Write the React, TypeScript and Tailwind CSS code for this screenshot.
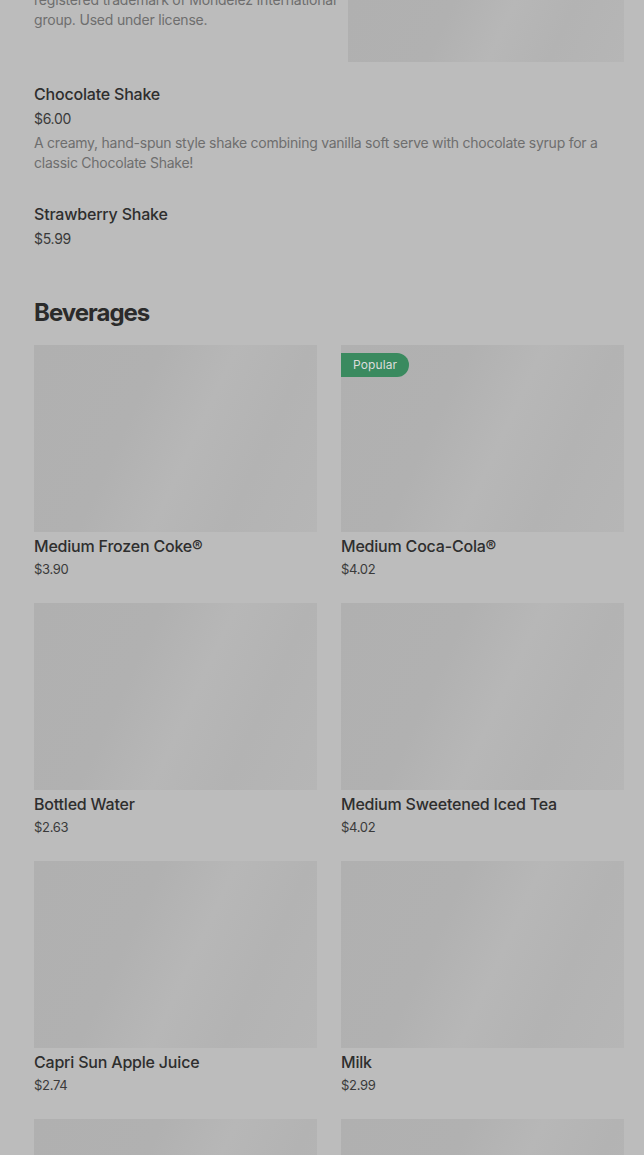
import React from "react";

const font = { fontFamily: "Inter, 'Noto Sans', 'Liberation Sans', sans-serif" };

const drinks: { name: string; price: string; popular?: boolean }[] = [
  { name: "Medium Frozen Coke®", price: "$3.90" },
  { name: "Medium Coca-Cola®", price: "$4.02", popular: true },
  { name: "Bottled Water", price: "$2.63" },
  { name: "Medium Sweetened Iced Tea", price: "$4.02" },
  { name: "Capri Sun Apple Juice", price: "$2.74" },
  { name: "Milk", price: "$2.99" },
];

function Placeholder({ className }: { className: string }) {
  return (
    <div
      className={
        "bg-[linear-gradient(115deg,#b0b0b0_0%,#b1b1b1_35%,#b7b7b7_55%,#b3b3b3_75%,#b6b6b6_100%)] " +
        className
      }
    />
  );
}

export default function App() {
  return (
    <div className="h-[1155px] w-[644px] overflow-hidden bg-[#bcbcbc] pl-[34px] pr-[20px]" style={font}>
      {/* previous item (cut off) */}
      <div className="flex justify-between">
        <p className="-mt-[10px] w-[306px] text-[14px] leading-[20px] tracking-[-0.2px] text-[#6e6e6e]">
          registered trademark of Mondelez International group. Used under license.
        </p>
        <Placeholder className="h-[62px] w-[276px]" />
      </div>

      {/* Chocolate Shake */}
      <div className="pt-[20px]">
        <h3 className="text-[16px] leading-[24px] font-medium tracking-[-0.2px] text-[#2e2e2e]">Chocolate Shake</h3>
        <p className="mt-[3px] text-[14px] leading-[20px] tracking-[-0.3px] text-[#3a3a3a]">$6.00</p>
        <p className="mt-[4px] text-[14px] leading-[20px] tracking-[-0.25px] text-[#6e6e6e]">
          A creamy, hand-spun style shake combining vanilla soft serve with chocolate syrup for a classic Chocolate Shake!
        </p>
      </div>

      {/* Strawberry Shake */}
      <div className="pt-[29px]">
        <h3 className="text-[16px] leading-[24px] font-medium tracking-[-0.2px] text-[#2e2e2e]">Strawberry Shake</h3>
        <p className="mt-[3px] text-[14px] leading-[20px] tracking-[-0.3px] text-[#3a3a3a]">$5.99</p>
      </div>

      {/* Beverages */}
      <h2 className="mt-[48px] text-[24px] leading-[32px] font-bold tracking-[-1px] text-[#2b2b2b]">Beverages</h2>

      <div className="mt-[16px] grid grid-cols-2 gap-x-[24px] gap-y-[24px]">
        {drinks.map((d) => (
          <div key={d.name} className="flex flex-col">
            <div className="relative">
              <Placeholder className="h-[187px] w-full" />
              {d.popular && (
                <span className="absolute left-0 top-[8px] flex h-[24px] items-center rounded-r-full bg-[#3a8a5f] pl-[12px] pr-[12px] text-[12px] tracking-[0.1px] text-[#dcdcdc]">
                  Popular
                </span>
              )}
            </div>
            <h3 className="mt-[2px] text-[16px] leading-[24px] font-medium tracking-[-0.2px] text-[#2e2e2e]">{d.name}</h3>
            <p className="mt-[1px] text-[13px] leading-[20px] tracking-[-0.3px] text-[#3a3a3a]">{d.price}</p>
          </div>
        ))}
        <Placeholder className="h-[187px] w-full" />
        <Placeholder className="h-[187px] w-full" />
      </div>
    </div>
  );
}
